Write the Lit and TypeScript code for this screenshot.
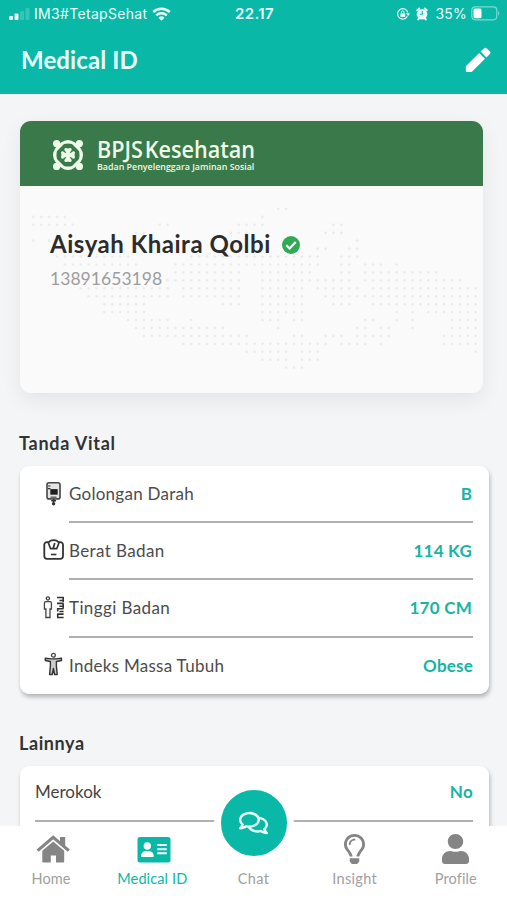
import { LitElement, html, svg, css } from "lit";
import { customElement } from "lit/decorators.js";

// Dotted map: for every grid row, the inclusive column ranges that carry a dot.
const MAP_ROWS: number[][][] = [
  [[31, 32]],
  [[0, 4], [29, 29]],
  [[0, 5], [16, 17], [26, 29], [38, 39]],
  [[13, 14], [25, 27], [37, 39]],
  [[0, 0], [2, 3], [41, 41]],
  [[36, 37], [40, 41]],
  [[3, 12], [20, 36], [39, 41]],
  [[4, 13], [18, 36], [39, 40], [42, 44], [46, 46]],
  [[18, 26], [29, 35], [39, 40], [42, 51]],
  [[17, 26], [29, 40], [42, 54]],
  [[6, 17], [19, 26], [29, 34], [36, 41], [43, 56]],
  [[7, 17], [19, 26], [29, 34], [37, 56]],
  [[9, 14], [24, 26], [29, 34], [38, 40], [43, 56]],
  [[9, 14], [29, 34], [46, 46], [48, 48], [50, 56]],
  [[12, 17], [20, 20], [29, 31], [33, 34], [42, 43], [46, 46], [48, 48], [53, 56]],
  [[13, 24], [31, 31], [41, 42], [44, 45], [48, 48], [53, 56]],
  [[14, 27], [33, 34], [37, 39], [41, 45], [52, 56]],
  [[19, 37], [39, 42], [44, 44], [52, 56]],
  [[27, 32], [34, 36], [56, 56]],
  [[29, 32], [34, 36]],
  [[32, 34]],
];

const mapDots = MAP_ROWS.flatMap((ranges, r) =>
  ranges.flatMap(([a, b]) =>
    Array.from({ length: b - a + 1 }, (_, i) => svg`<circle cx=${13.3 + (a + i) * 7.9} cy=${23 + r * 7.93} r="1.35"></circle>`)
  )
);

const bloodIcon = svg`
  <rect x="4" y="1.2" width="13" height="16.2" rx="2" fill="#e4e4e4" stroke="#444" stroke-width="1.6"/>
  <path d="M7.3 7.6h7.4v5.6H7.3z" fill="#1f1f1f"/><path d="M5 4.5h2.500M5 7.200h2.500" stroke="#333" stroke-width="1.2"/>
  <path d="M7.5 15h6v2.400h-6z" fill="#666"/>
  <path d="M10.6 17.500v5M8.2 19.300h4.800" stroke="#333" stroke-width="1.4"/><circle cx="10.6" cy="22.300" r="1.7" fill="#333"/>`;
const scaleIcon = svg`
  <path d="M5.2 3.6H4A2.6 2.6 0 0 0 1.3 6.2V17.6A2.8 2.8 0 0 0 4.1 20.4H17.2A2.8 2.8 0 0 0 20 17.6V6.2A2.6 2.6 0 0 0 17.3 3.6H16" fill="none" stroke="#333" stroke-width="1.8"/>
  <path d="M7.6 10.2 5.3 4.2C7.5.7 13.8.7 16 4.2L13.7 10.2ZM10.2 9.8 11.8 4.4" fill="none" stroke="#333" stroke-width="1.7" stroke-linejoin="round"/>
  <path d="M8 16h5.4" stroke="#333" stroke-width="1.6"/>`;
const heightIcon = svg`
  <circle cx="4.9" cy="2.9" r="1.6" fill="none" stroke="#444" stroke-width="1.3"/>
  <path d="M2.8 6.2H7A1.5 1.5 0 0 1 8.4 7.7V13.5H7V22H2.9V13.5H1.4V7.7A1.5 1.5 0 0 1 2.8 6.2Z" fill="none" stroke="#444" stroke-width="1.3"/>
  <path d="M14 2h6.6M16.4 5h4.2M14 7.9h6.6M16.4 10.8h4.2M14 13.3h6.6M16.4 16h4.2M14 18.6h6.6M14 22h6.6M20.2 1.4v5M20.2 8v5M14.7 13v3M14.7 19v3" stroke="#333" stroke-width="1.6" fill="none"/>`;
const bodyIcon = svg`
  <circle cx="10.4" cy="2.8" r="1.9" fill="none" stroke="#444" stroke-width="1.3"/>
  <path d="M2.3 5.8 8.4 6.4H12.4L18.5 5.8V8L13.4 9V13.4L14.2 22H11.6L10.4 16 9.2 22H6.6L7.4 13.4V9L2.3 8Z" fill="#ccc" stroke="#333" stroke-width="1.4" stroke-linejoin="round"/>`;

const VITALS = [
  { icon: bloodIcon, name: "Golongan Darah", cls: "n1", value: "B", v: "v1" },
  { icon: scaleIcon, name: "Berat Badan", cls: "n2", value: "114 KG", v: "v2" },
  { icon: heightIcon, name: "Tinggi Badan", cls: "n3", value: "170 CM", v: "v3" },
  { icon: bodyIcon, name: "Indeks Massa Tubuh", cls: "n4", value: "Obese", v: "v4" },
];

const NAV = [
  { label: "Home", cls: "home", icon: html`<svg width="34" height="32" viewBox="0 0 34 32"><path d="M1.6 17.6 17.2 4.4 32.8 17.6" fill="none" stroke="currentColor" stroke-width="3.2"/><path d="M24 4h5.2v10L24 9.600z"/><path d="M6.300 17.700 17.200 8.600 28.200 17.700V28.600a1 1 0 0 1-1 1H20V22.500H14.800V29.600H7.300a1 1 0 0 1-1-1Z"/></svg>` },
  { label: "Medical ID", cls: "medical", icon: html`<svg width="34" height="32" viewBox="0 0 34 32"><rect x=".5" y="4" width="33" height="25.500" rx="2.500"/><g fill="#fff"><circle cx="10.300" cy="13" r="3.700"/><path d="M4 23.500c0-3.500 1.800-5.300 4.500-5.300h3.800c2.700 0 4.500 1.800 4.500 5.300 0 .4-.3.600-.6.600H4.600c-.3 0-.6-.2-.6-.6Z"/><path d="M20.300 11h9.500v2h-9.500zM20.300 15.200h9.500v2h-9.500zM20.300 19.300h9.500v2h-9.500z"/></g></svg>` },
  { label: "Chat", cls: "chat", icon: html`` },
  { label: "Insight", cls: "insight", icon: html`<svg width="21" height="30" viewBox="0 0 352 512" preserveAspectRatio="none"><path d="M176 80c-52.940 0-96 43.060-96 96 0 8.840 7.160 16 16 16s16-7.160 16-16c0-35.300 28.720-64 64-64 8.840 0 16-7.160 16-16s-7.160-16-16-16zM96.060 459.170c0 3.150.93 6.220 2.680 8.840l24.510 36.840c2.970 4.460 7.970 7.140 13.320 7.140h78.850c5.360 0 10.360-2.680 13.320-7.140l24.510-36.840c1.740-2.620 2.670-5.700 2.680-8.840l.05-43.180H96.020l.04 43.180zM176 0C73.720 0 0 82.970 0 176c0 44.370 16.450 84.850 43.560 115.780 16.640 18.990 42.740 58.800 52.420 92.160v.06h48v-.12c-.01-4.770-.72-9.510-2.150-14.070-5.590-17.810-22.820-64.770-62.170-109.670-20.540-23.430-31.520-53.150-31.610-84.140-.2-73.640 59.670-128 127.950-128 70.580 0 128 57.420 128 128 0 30.970-11.240 60.850-31.650 84.140-39.110 44.610-56.420 91.470-62.100 109.460a47.507 47.507 0 0 0-2.220 14.300v.1h48v-.05c9.680-33.370 35.780-73.180 52.420-92.160C335.550 260.850 352 220.370 352 176 352 78.800 273.200 0 176 0z"/></svg>` },
  { label: "Profile", cls: "profile", icon: html`<svg width="27" height="30" viewBox="0 0 448 512" preserveAspectRatio="none"><path d="M224 256c70.700 0 128-57.300 128-128S294.700 0 224 0 96 57.300 96 128s57.300 128 128 128zm89.600 32h-16.700c-22.200 10.200-46.900 16-72.900 16s-50.600-5.800-72.900-16h-16.700C60.200 288 0 348.200 0 422.400V464c0 26.500 21.500 48 48 48h352c26.500 0 48-21.500 48-48v-41.600c0-74.200-60.200-134.400-134.400-134.400z"/></svg>` },
];

@customElement("app-root")
export class AppRoot extends LitElement {
  static styles = css`
    :host { display: block; position: relative; height: 900px; overflow: hidden; background: #f3f5f7; color: #333; font-family: Lato, "Open Sans", sans-serif; }
    * { box-sizing: border-box; }
    svg { display: block; flex: none; }
    span, h1, h2, h3 { white-space: nowrap; }
    h1, h2, h3 { margin: 0; }
    header { height: 94px; background: #09b8a7; color: #e9fffc; }
    .status { display: grid; grid-template-columns: 1fr auto 1fr; height: 27px; align-items: center; padding: 0 7px 0 9px; font-family: Inter, sans-serif; }
    .left, .right { display: flex; align-items: center; }
    .right { justify-content: flex-end; }
    .left svg { margin-right: 4px; }
    .left .wifi { margin: 0 0 0 5px; }
    .carrier { font-size: 14px; letter-spacing: .32px; }
    .clock { font-weight: 600; font-size: 15px; letter-spacing: .35px; }
    .pct { margin: 0 4px 0 6px; font-size: 14px; letter-spacing: .2px; }
    .title { display: flex; align-items: center; justify-content: space-between; height: 65px; padding: 0 16px 0 21px; }
    .title h1 { font-size: 24px; font-weight: 700; letter-spacing: .12px; padding-bottom: 1px; }
    .idcard { position: relative; width: 463px; height: 272px; margin: 27px 0 0 20px; border-radius: 11px; overflow: hidden; background: #fafafa; }
    .shade { border-radius: 11px; width: 463px; margin-left: 20px; margin-top: -272px; height: 272px; box-shadow: 0 7px 20px rgba(0,0,0,.07); }
    .brand { height: 65px; background: #3a794a; display: flex; align-items: center; gap: 13px; padding: 3px 0 0 32px; color: #effbe9; }
    .brandtext { display: flex; flex-direction: column; width: 180px; }
    .brandtext span { transform-origin: left center; align-self: flex-start; }
    .bname { font: 600 23px/23px "Open Sans", sans-serif; word-spacing: -4px; transform: scaleX(.94); }
    .bsub { font: 600 9.500px/12px "Open Sans", sans-serif; transform: scaleX(.934); }
    .map { position: absolute; left: 0; top: 65px; }
    .person { position: relative; padding: 41px 0 0 30px; }
    .namerow { display: flex; align-items: center; gap: 11px; height: 34px; }
    .namerow h2 { font-size: 24px; line-height: 34px; font-weight: 700; color: #2c2c2c; letter-spacing: .53px; }
    .namerow svg { margin-top: 2px; }
    .number { display: block; line-height: 24px; margin-top: 6px; font-size: 17.500px; color: #9d9d9d; letter-spacing: .05px; }
    h3 { font-size: 18px; line-height: 24px; font-weight: 700; margin-left: 19px; color: #333; }
    .hv { letter-spacing: .75px; }
    .ho { letter-spacing: .6px; }
    .vital { margin-top: 38px; }
    .other { margin-top: 37px; }
    .list { width: 469px; margin: 11px 0 0 20px; border-radius: 9px; background: #fff; box-shadow: 1px 3px 4px rgba(0,0,0,.27); padding-right: 16px; }
    .row { display: flex; align-items: center; height: 57.500px; padding-left: 23px; }
    .row:first-child, .row:last-child { height: 56.500px; }
    .row svg { margin: -2px 4px 0 0; }
    .cell { flex: 1; align-self: stretch; display: flex; align-items: center; justify-content: space-between; border-bottom: 2px solid #b0b0b0; font-size: 17px; color: #4c4c4c; }
    .row:last-child .cell { border-bottom: 0; }
    .n1 { letter-spacing: .25px; }
    .n2 { letter-spacing: .38px; }
    .n3 { letter-spacing: .4px; }
    .n4 { letter-spacing: .28px; }
    .val { color: #16b4a3; font-weight: 700; }
    .v1 { margin-right: 1px; }
    .v2, .v3 { letter-spacing: .25px; margin-right: 1px; }
    .v4 { letter-spacing: .2px; }
    .v5 { letter-spacing: .3px; }
    .list.more { height: 140px; }
    .more .row:first-child { padding-left: 15px; height: 56px; }
    .more .cell { border-bottom: 2px solid #b0b0b0 !important; padding-bottom: 3px; color: #444; }
    nav { position: absolute; left: 0; right: 0; bottom: 0; height: 74px; background: #fff; display: grid; grid-template-columns: repeat(5, 101.200px); }
    .tab { display: flex; flex-direction: column; align-items: center; color: #a0a0a0; font-size: 14.500px; padding: 6px 0 0 1px; }
    .tab svg { fill: currentColor; color: #858585; }
    .slot { height: 34px; display: flex; align-items: center; }
    .home .slot, .medical .slot { padding-left: 4px; }
    .tab span { line-height: 20px; margin-top: 3px; letter-spacing: .12px; }
    .chat span, .insight span { letter-spacing: .35px; }
    .medical, .medical svg { color: #09b8a7; }
    .fab { position: absolute; left: 214px; bottom: 37px; width: 80px; height: 80px; border: 7.500px solid #fff; border-radius: 50%; background: #09b8a7; display: flex; align-items: center; justify-content: center; }
    .fab svg { margin-left: -1px; }
  `;

  render() {
    return html`
      <header>
        <div class="status">
          <div class="left">
            <svg width="21" height="12" viewBox="0 0 21 12" fill="#e9fffc"><rect x="0" y="8" width="4" height="4" rx="1"/><rect x="5.500" y="5.500" width="4" height="6.500" rx="1"/><rect x="11" y="3" width="4" height="9" rx="1" opacity=".2"/><rect x="16.500" y="0" width="4" height="12" rx="1" opacity=".2"/></svg>
            <span class="carrier">IM3#TetapSehat</span>
            <svg class="wifi" width="19" height="14" viewBox="0 0 19 14"><g fill="none" stroke="#e9fffc" stroke-width="2.400"><path d="M1.200 5A12.300 12.300 0 0 1 17.800 5"/><path d="M4.200 8.300A8 8 0 0 1 14.800 8.300"/></g><path d="M6.500 10.700A4.300 4.300 0 0 1 12.500 10.700L9.500 13.700Z" fill="#e9fffc"/></svg>
          </div>
          <span class="clock">22.17</span>
          <div class="right">
            <svg width="14" height="14" viewBox="0 0 14 14"><path d="M11.400 9.300A5.200 5.200 0 1 1 11.800 5.500" fill="none" stroke="#e9fffc" stroke-width="1.200"/><path d="M10 6.200h4l-1.800 3z" fill="#e9fffc"/><path d="M4.400 6.500h4.800v3.400H4.400z" fill="#e9fffc"/><path d="M5.500 6.500V5.300a1.300 1.300 0 0 1 2.600 0v1.200" fill="none" stroke="#e9fffc"/></svg>
            <svg class="alarm" width="19" height="14" viewBox="-6 0 19 14"><circle cx="6" cy="7.200" r="5.300" fill="#e9fffc"/><path d="M1.200 3.200 3.200 1.500M10.800 3.200 8.800 1.500M2.200 12.500l1-1.500M9.800 12.500l-1-1.500" stroke="#e9fffc" stroke-width="2" stroke-linecap="round"/><path d="M6.300 4v3.300H3.800" fill="none" stroke="#09b8a7" stroke-width="1.100"/></svg>
            <span class="pct">35%</span>
            <svg width="29" height="15" viewBox="0 0 29 15"><rect x=".8" y=".8" width="25" height="13" rx="3.500" fill="none" stroke="#7fd9cf" stroke-width="1.200"/><rect x="2.500" y="2.600" width="8" height="9.600" rx="1.500" fill="#fff"/><path d="M27.200 5c1.500.8 1.500 4 0 4.800z" fill="#7fd9cf"/></svg>
          </div>
        </div>
        <div class="title">
          <h1 class="t">Medical ID</h1>
          <svg width="26" height="26" viewBox="0 0 26 26" fill="#fff"><path d="M.8 19.300 14.200 6 20 11.800 6.700 25.100H2A1.200 1.200 0 0 1 .8 23.900Z"/><path d="M15.600 4.600 18.900 1.400A2 2 0 0 1 21.800 1.400L24.700 4.300A2 2 0 0 1 24.700 7.200L21.400 10.400Z"/></svg>
        </div>
      </header>

      <section class="idcard">
        <div class="brand">
          <svg width="32" height="32" viewBox="0 0 32 32" fill="#effbe9">
            <circle cx="4.600" cy="4.600" r="3.600"/><circle cx="27.400" cy="4.600" r="3.600"/><circle cx="4.600" cy="27.400" r="3.600"/><circle cx="27.400" cy="27.400" r="3.600"/>
            <path d="M9 3.500Q16-1.500 23 3.500L28.500 9Q33.500 16 28.500 23L23 28.500Q16 33.500 9 28.500L3.500 23Q-1.500 16 3.500 9ZM12 5 5 12Q4 16 5 20L12 27Q16 28 20 27L27 20Q28 16 27 12L20 5Q16 4 12 5Z" fill-rule="evenodd"/>
            <path d="M16 16 12.300 11Q12 8 16 9.500 20 8 19.700 11ZM16 16 12.300 21Q12 24 16 22.500 20 24 19.700 21ZM16 16 11 12.300Q8 12 9.500 16 8 20 11 19.700ZM16 16 21 12.300Q24 12 22.500 16 24 20 21 19.700Z"/><circle cx="16" cy="16" r="3"/>
          </svg>
          <div class="brandtext"><span class="bname">BPJS Kesehatan</span><span class="bsub">Badan Penyelenggara Jaminan Sosial</span></div>
        </div>
        <svg class="map" width="463" height="207" viewBox="0 0 463 207" fill="#ebebeb">${mapDots}</svg>
        <div class="person">
          <div class="namerow">
            <h2>Aisyah Khaira Qolbi</h2>
            <svg width="18" height="18" viewBox="0 0 18 18"><circle cx="9" cy="9" r="9" fill="#2fab55"/><path d="M4.300 9.300 7.600 12.500 13.700 6" fill="none" stroke="#fff" stroke-width="2.200"/></svg>
          </div>
          <span class="number">13891653198</span>
        </div>
      </section>
      <div class="shade"></div>

      <h3 class="vital"><span class="hv">Tanda Vital</span></h3>
      <section class="list">
        ${VITALS.map((r) => html`<div class="row"><svg width="22" height="25" viewBox="0 0 22 24">${r.icon}</svg><div class="cell"><span class=${r.cls}>${r.name}</span><span class="val ${r.v}">${r.value}</span></div></div>`)}
      </section>

      <h3 class="other"><span class="ho">Lainnya</span></h3>
      <section class="list more">
        <div class="row"><div class="cell"><span class="n5">Merokok</span><span class="val v5">No</span></div></div>
      </section>

      <nav>
        ${NAV.map((n) => html`<div class="tab ${n.cls}"><div class="slot">${n.icon}</div><span>${n.label}</span></div>`)}
        <div class="fab"><svg width="29" height="26" viewBox="0 0 576 512" fill="#e9fffc"><path d="M532 386.200c27.500-27.100 44-61.100 44-98.200 0-80-76.500-146.100-176.200-157.900C368.300 72.500 294.300 32 208 32 93.100 32 0 103.600 0 192c0 37 16.500 71 44 98.200-15.300 30.700-37.300 54.500-37.700 54.900-6.300 6.700-8.100 16.500-4.400 25 3.600 8.500 12 14 21.200 14 53.500 0 96.700-20.200 125.200-38.800 9.200 2.100 18.700 3.700 28.400 4.900C208.100 407.600 281.800 448 368 448c20.800 0 40.800-2.400 59.800-6.800C456.300 459.700 499.400 480 553 480c9.200 0 17.500-5.500 21.200-14 3.600-8.500 1.900-18.300-4.400-25-.4-.3-22.500-24.100-37.800-54.800zm-392.800-92.300L122.100 305c-14.100 9.100-28.500 16.300-43.100 21.400 2.700-4.700 5.400-9.700 8-14.800l15.500-31.100L77.700 256C64.200 242.600 48 220.700 48 192c0-60.700 73.300-112 160-112s160 51.300 160 112-73.300 112-160 112c-16.500 0-33-1.900-49-5.600l-19.800-4.500zM498.300 352l-24.700 24.400 15.500 31.100c2.600 5.100 5.300 10.100 8 14.800-14.600-5.100-29-12.300-43.100-21.400l-17.100-11.100-19.900 4.600c-16 3.700-32.500 5.600-49 5.600-54 0-102.200-20.100-131.300-49.700C338 339.500 416 272.900 416 192c0-3.400-.4-6.700-.7-10C479.700 196.500 528 238.800 528 288c0 28.700-16.200 50.600-29.700 64z"/></svg></div>
      </nav>
    `;
  }
}
